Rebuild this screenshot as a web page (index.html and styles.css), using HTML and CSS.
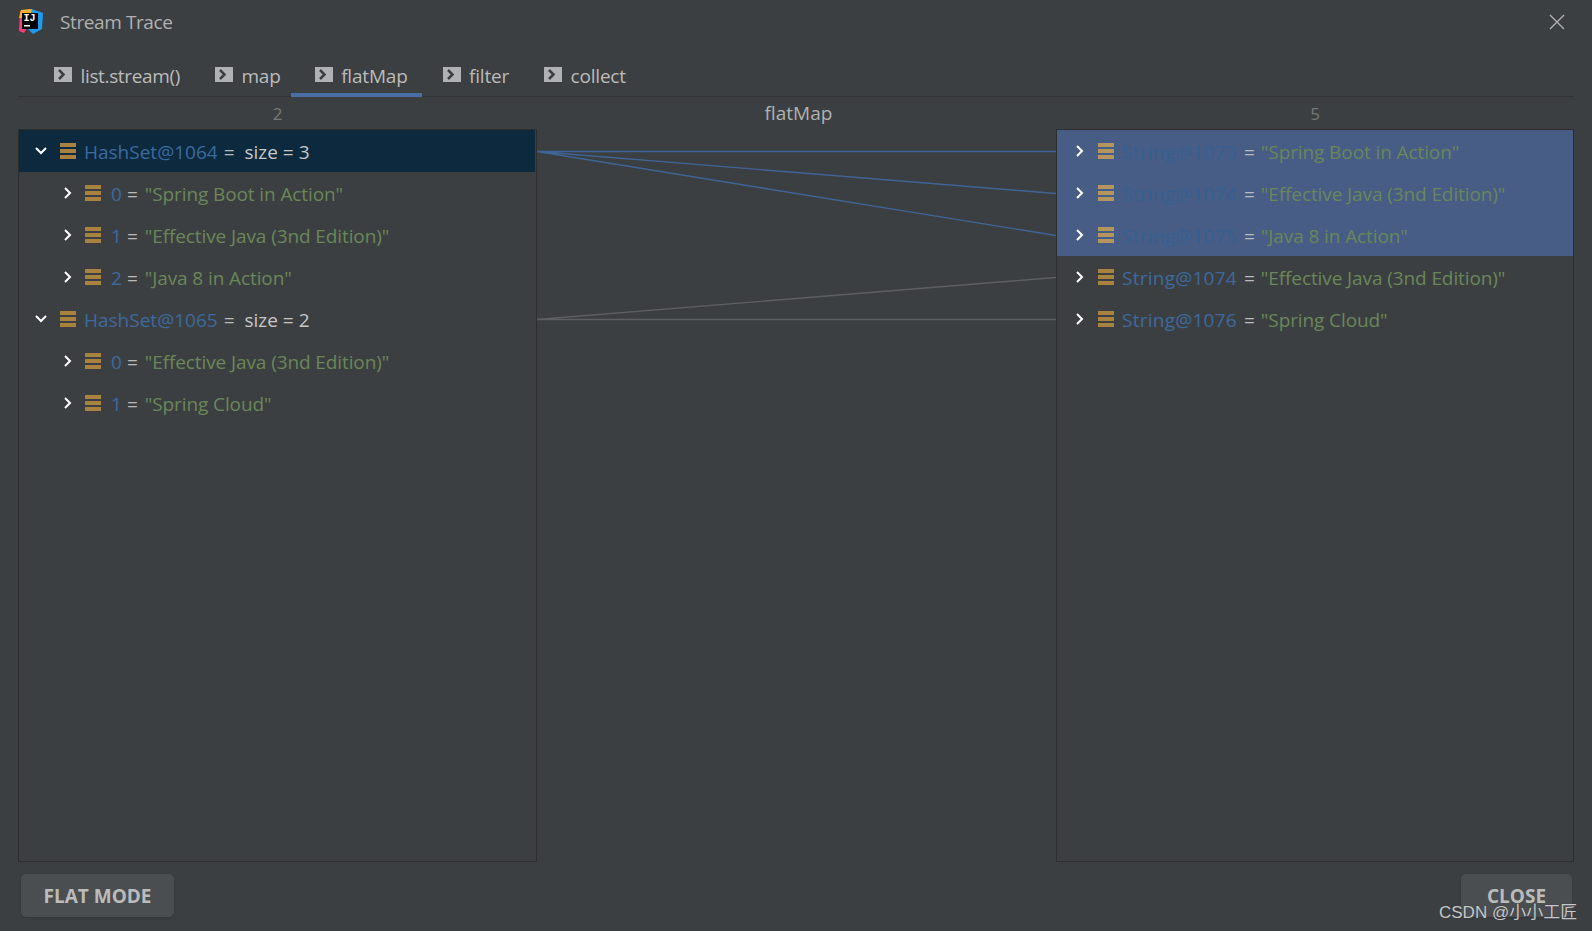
FILE: index.html
```html
<html>
<head>
    <title>Stream Trace</title>
    <link rel="stylesheet" href="styles.css">
</head>
<body>

<svg width="0" height="0" class="defs">
    <symbol id="chevron-right" viewBox="0 0 12 14"><path d="M3 2l5 5-5 5" fill="none" stroke="currentColor" stroke-width="2"/></symbol>
    <symbol id="chevron-down" viewBox="0 0 14 12"><path d="M2 3l5 5 5-5" fill="none" stroke="currentColor" stroke-width="2"/></symbol>
    <symbol id="bars" viewBox="0 0 16 16"><path d="M0 0h16v4H0zM0 6h16v4H0zM0 12h16v4H0z" fill="currentColor"/></symbol>
    <symbol id="tab-icon" viewBox="0 0 18 15"><path d="M0 0h18v15H0z" fill="#afb1b3"/><path d="M5 3l4.500 4.500L5 12" fill="none" stroke="#3c3f41" stroke-width="2.500"/></symbol>
</svg>

<div class="dialog">
    <!-- Naslov -->
    <div class="titlebar">
        <svg class="logo" width="26" height="26" viewBox="0 0 26 26">
            <polygon points="14,0 25,4 24,20 15,25 8,18" fill="#1c9bf0"/>
            <polygon points="2,2 12,0 13,12 6,24 1,22" fill="#fc3a78"/>
            <polygon points="3,1 14,0 12,8 1,9" fill="#fdb32a"/>
            <rect x="4" y="4" width="16" height="16" fill="#000"/>
            <text x="5.500" y="12" class="logo-text">IJ</text>
            <rect x="6" y="16" width="6" height="1.500" fill="#fff"/>
        </svg>
        <span class="title">Stream Trace</span>
        <svg class="close-x" width="16" height="16" viewBox="0 0 16 16"><path d="M1 1l14 14M15 1L1 15" stroke="#afb1b3" stroke-width="1.400"/></svg>
    </div>

    <!-- Tabovi -->
    <div class="tabs">
        <div class="tab tab-first"><svg class="tab-icon"><use href="#tab-icon"/></svg>list.stream()</div>
        <div class="tab"><svg class="tab-icon"><use href="#tab-icon"/></svg>map</div>
        <div class="tab active"><svg class="tab-icon"><use href="#tab-icon"/></svg>flatMap</div>
        <div class="tab"><svg class="tab-icon"><use href="#tab-icon"/></svg>filter</div>
        <div class="tab"><svg class="tab-icon"><use href="#tab-icon"/></svg>collect</div>
    </div>

    <div class="columns">
        <!-- Leva kolona -->
        <div class="column side side-left">
            <div class="count">2</div>
            <div class="tree">
                <div class="row root selected-dark">
                    <svg class="chev-down"><use href="#chevron-down"/></svg>
                    <svg class="bars"><use href="#bars"/></svg>
                    <span class="ref">HashSet@1064</span><span class="eq">=</span><span class="size">size = 3</span>
                </div>
                <div class="row child">
                    <svg class="chev"><use href="#chevron-right"/></svg>
                    <svg class="bars"><use href="#bars"/></svg>
                    <span class="ref">0</span><span class="eq">=</span><span class="str">"Spring Boot in Action"</span>
                </div>
                <div class="row child">
                    <svg class="chev"><use href="#chevron-right"/></svg>
                    <svg class="bars"><use href="#bars"/></svg>
                    <span class="ref">1</span><span class="eq">=</span><span class="str">"Effective Java (3nd Edition)"</span>
                </div>
                <div class="row child">
                    <svg class="chev"><use href="#chevron-right"/></svg>
                    <svg class="bars"><use href="#bars"/></svg>
                    <span class="ref">2</span><span class="eq">=</span><span class="str">"Java 8 in Action"</span>
                </div>
                <div class="row root">
                    <svg class="chev-down"><use href="#chevron-down"/></svg>
                    <svg class="bars"><use href="#bars"/></svg>
                    <span class="ref">HashSet@1065</span><span class="eq">=</span><span class="size">size = 2</span>
                </div>
                <div class="row child">
                    <svg class="chev"><use href="#chevron-right"/></svg>
                    <svg class="bars"><use href="#bars"/></svg>
                    <span class="ref">0</span><span class="eq">=</span><span class="str">"Effective Java (3nd Edition)"</span>
                </div>
                <div class="row child">
                    <svg class="chev"><use href="#chevron-right"/></svg>
                    <svg class="bars"><use href="#bars"/></svg>
                    <span class="ref">1</span><span class="eq">=</span><span class="str">"Spring Cloud"</span>
                </div>
            </div>
        </div>

        <!-- Srednja kolona sa linijama -->
        <div class="column middle">
            <div class="count op">flatMap</div>
            <svg class="links" width="519" height="733" viewBox="0 0 519 733">
                <path d="M0 22.500L519 22.500M0 22.500L519 64.500M0 22.500L519 106.500" class="link-on"/>
                <path d="M0 190.500L519 148.500M0 190.500L519 190.500" class="link-off"/>
            </svg>
        </div>

        <!-- Desna kolona -->
        <div class="column side side-right">
            <div class="count">5</div>
            <div class="tree">
                <div class="row leaf selected">
                    <svg class="chev"><use href="#chevron-right"/></svg>
                    <svg class="bars"><use href="#bars"/></svg>
                    <span class="ref">String@1073</span><span class="eq">=</span><span class="str">"Spring Boot in Action"</span>
                </div>
                <div class="row leaf selected">
                    <svg class="chev"><use href="#chevron-right"/></svg>
                    <svg class="bars"><use href="#bars"/></svg>
                    <span class="ref">String@1074</span><span class="eq">=</span><span class="str">"Effective Java (3nd Edition)"</span>
                </div>
                <div class="row leaf selected">
                    <svg class="chev"><use href="#chevron-right"/></svg>
                    <svg class="bars"><use href="#bars"/></svg>
                    <span class="ref">String@1075</span><span class="eq">=</span><span class="str">"Java 8 in Action"</span>
                </div>
                <div class="row leaf">
                    <svg class="chev"><use href="#chevron-right"/></svg>
                    <svg class="bars"><use href="#bars"/></svg>
                    <span class="ref">String@1074</span><span class="eq">=</span><span class="str">"Effective Java (3nd Edition)"</span>
                </div>
                <div class="row leaf">
                    <svg class="chev"><use href="#chevron-right"/></svg>
                    <svg class="bars"><use href="#bars"/></svg>
                    <span class="ref">String@1076</span><span class="eq">=</span><span class="str">"Spring Cloud"</span>
                </div>
            </div>
        </div>
    </div>

    <!-- Dugmad -->
    <div class="footer">
        <button type="button" class="btn btn-flat">FLAT MODE</button>
        <button type="button" class="btn btn-close">CLOSE</button>
    </div>
</div>

<div class="watermark">CSDN @小小工匠</div>

</body>
</html>
```

FILE: styles.css
```css
/* Osnovni stil */
body {
    margin: 0;
    background-color: #3c3f41;
    color: #bbbbbb;
    font-family: 'Open Sans', 'Noto Sans', sans-serif;
    font-size: 19px;
    overflow: hidden;
}

.defs {
    position: absolute;
}

.dialog {
    width: 1592px;
    height: 931px;
    display: flex;
    flex-direction: column;
    padding: 0 18px;
    box-sizing: border-box;
}

/* Naslov */
.titlebar {
    height: 44px;
    display: flex;
    align-items: center;
    flex-shrink: 0;
}

.logo {
    margin-right: 16px;
}

.logo-text {
    font-family: 'Liberation Mono', monospace;
    font-size: 10px;
    font-weight: bold;
    fill: #fff;
}

.title {
    color: #afb1b3;
    letter-spacing: -0.4px;
}

.close-x {
    margin-left: auto;
    margin-right: 9px;
}

/* Tabovi */
.tabs {
    height: 53px;
    display: flex;
    align-items: stretch;
    padding-left: 14px;
    border-bottom: 1px solid #323232;
    flex-shrink: 0;
    box-sizing: border-box;
    letter-spacing: -0.2px;
}

.tab {
    display: flex;
    align-items: center;
    padding: 15px 13px 0 22px;
    margin-bottom: -1px;
    border-bottom: 4px solid transparent;
}

.tab-first {
    letter-spacing: -0.35px;
}

.tab.active {
    border-bottom-color: #4a6fa5;
    padding-left: 24px;
    padding-right: 14px;
    margin-left: -3px;
    margin-right: -1px;
}

.tab-icon {
    width: 18px;
    height: 15px;
    margin-right: 8.500px;
    margin-top: -4px;
}

/* Kolone */
.columns {
    flex: 1;
    display: flex;
    min-height: 0;
}

.column {
    display: flex;
    flex-direction: column;
}

.side {
    flex-shrink: 0;
}

.side-left {
    width: 519px;
}

.side-right {
    width: 518px;
}

.middle {
    flex: 1;
    min-width: 0;
}

.count {
    height: 32px;
    line-height: 34px;
    text-align: center;
    font-size: 17px;
    color: #787878;
    flex-shrink: 0;
}

.count.op {
    font-size: 19px;
    color: #afb1b3;
    line-height: 32px;
    padding-left: 4px;
}

.tree {
    flex: 1;
    border: 1px solid #2e2e2e;
}

.links {
    display: block;
}

.link-on {
    fill: none;
    stroke: #3f6596;
    stroke-width: 1.400;
}

.link-off {
    fill: none;
    stroke: #5d5f61;
    stroke-width: 1.400;
}

/* Redovi stabla */
.row {
    height: 42px;
    padding-top: 2px;
    box-sizing: border-box;
    display: flex;
    align-items: center;
    white-space: pre;
}

.root {
    padding-left: 15px;
}

.child {
    padding-left: 43px;
}

.leaf {
    padding-left: 17px;
}

.selected-dark {
    background-color: #0d293e;
    margin-right: 1px;
}

.selected {
    background-color: #475d85;
}

.chev {
    width: 12px;
    height: 14px;
    color: #fff;
    margin-top: -2px;
    margin-right: 11px;
}

.leaf .chev {
    margin-right: 12px;
}

.chev-down {
    width: 14px;
    height: 12px;
    color: #fff;
    margin-top: -2px;
    margin-right: 12px;
}

.bars {
    width: 16px;
    height: 16px;
    color: #a8823e;
    margin-right: 7px;
    margin-top: -2px;
}

.root .bars {
    margin-right: 8px;
}

.child .bars {
    margin-right: 10px;
}

.leaf .bars {
    margin-right: 8px;
}

.selected .bars {
    color: #b3965c;
}

.ref {
    color: #3d6a9e;
}

.leaf .ref {
    letter-spacing: 0.25px;
}

.selected .ref {
    color: #365f92;
}

.eq {
    margin: 0 7px;
}

.root .eq {
    margin: 0 10px 0 6px;
}

.child .eq {
    margin-left: 5px;
}

.leaf .eq {
    margin-right: 6px;
}

.str {
    color: #6a8759;
    letter-spacing: -0.1px;
}

.size {
    color: #c8c8c8;
}

/* Dugmad */
.footer {
    height: 69px;
    display: flex;
    justify-content: space-between;
    align-items: flex-start;
    padding: 12px 2px 0 3px;
    flex-shrink: 0;
    box-sizing: border-box;
}

.btn {
    height: 43px;
    background-color: #4b4e50;
    color: #bbbbbb;
    font-family: 'Open Sans', 'Noto Sans', sans-serif;
    font-size: 19px;
    font-weight: bold;
    border: none;
    border-radius: 5px;
    box-shadow: 0 1px 2px #333537;
}

.btn-flat {
    width: 153px;
}

.btn-close {
    width: 111px;
}

/* Vodeni žig */
.watermark {
    position: absolute;
    left: 1439px;
    top: 898px;
    font-family: 'Liberation Sans', 'Noto Sans CJK SC', sans-serif;
    font-size: 17px;
    color: #c6c8c9;
    text-shadow: 0 0 1px #333;
}
```
